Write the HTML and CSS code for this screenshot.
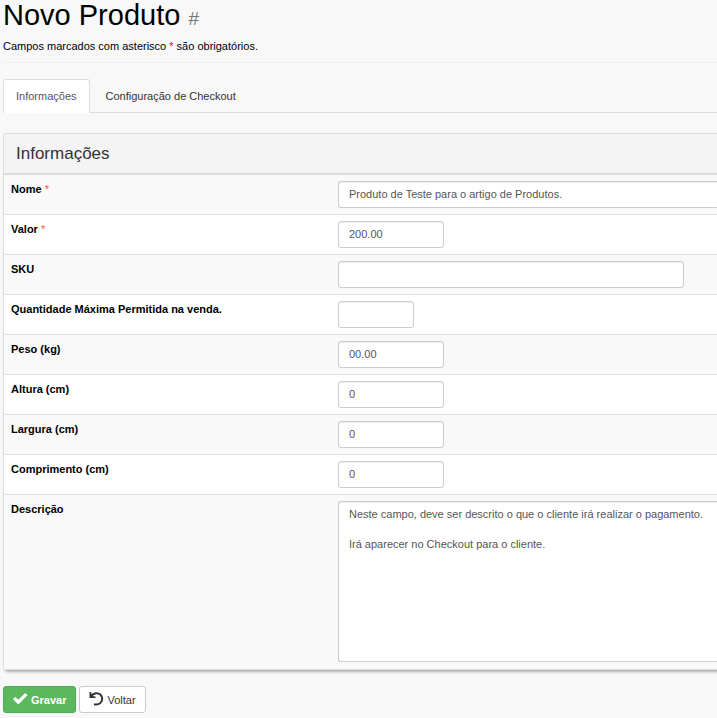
FILE: index.html
```html
<!DOCTYPE html>
<html lang="pt-BR">
<head>
  <meta charset="UTF-8">
  <meta name="viewport" content="width=device-width, initial-scale=1.0">
  <title>Novo Produto</title>
  <link rel="stylesheet" href="styles.css">
</head>
<body>
  <header class="page-header">
    <h1>Novo Produto <small>#</small></h1>
    <p>Campos marcados com asterisco <span class="required">*</span> são obrigatórios.</p>
  </header>

  <nav class="tabs">
    <a class="tab active" href="#informacoes">Informações</a>
    <a class="tab" href="#checkout">Configuração de Checkout</a>
  </nav>

  <form>
    <section class="panel" id="informacoes">
      <h2 class="panel-heading">Informações</h2>
      <div class="row">
        <label for="nome">Nome <span class="required">*</span></label>
        <div class="field"><input class="control full" type="text" id="nome" value="Produto de Teste para o artigo de Produtos."></div>
      </div>
      <div class="row">
        <label for="valor">Valor <span class="required">*</span></label>
        <div class="field"><input class="control small" type="text" id="valor" value="200.00"></div>
      </div>
      <div class="row">
        <label for="sku">SKU</label>
        <div class="field"><input class="control medium" type="text" id="sku"></div>
      </div>
      <div class="row">
        <label for="quantidade">Quantidade Máxima Permitida na venda.</label>
        <div class="field"><input class="control mini" type="text" id="quantidade"></div>
      </div>
      <div class="row">
        <label for="peso">Peso (kg)</label>
        <div class="field"><input class="control small" type="text" id="peso" value="00.00"></div>
      </div>
      <div class="row">
        <label for="altura">Altura (cm)</label>
        <div class="field"><input class="control small" type="text" id="altura" value="0"></div>
      </div>
      <div class="row">
        <label for="largura">Largura (cm)</label>
        <div class="field"><input class="control small" type="text" id="largura" value="0"></div>
      </div>
      <div class="row">
        <label for="comprimento">Comprimento (cm)</label>
        <div class="field"><input class="control small" type="text" id="comprimento" value="0"></div>
      </div>
      <div class="row">
        <label for="descricao">Descrição</label>
        <div class="field"><textarea class="control full" id="descricao">Neste campo, deve ser descrito o que o cliente irá realizar o pagamento.

Irá aparecer no Checkout para o cliente.</textarea></div>
      </div>
    </section>

    <div class="actions">
      <button class="btn btn-success" type="submit">
        <svg width="15" height="12" viewBox="0 0 15 12"><path d="M0 6.2 2.3 3.9 5.3 6.8 12.2 0 14.6 2.3 5.3 11.5Z" fill="currentColor"/></svg>
        Gravar
      </button>
      <button class="btn" type="button">
        <svg width="15" height="14" viewBox="0 0 15 14"><path d="M2.600 3.600C5 .8 9 .4 11.300 2.500C13.900 5 13.800 8.700 11.500 10.900C9.800 12.500 7.300 12.800 5 12.300" fill="none" stroke="currentColor" stroke-width="2"/><path d="M.5 0V6H6.500V4.500L4.400 4.200 2.300 1.800V0Z" fill="currentColor"/></svg>
        Voltar
      </button>
    </div>
  </form>
</body>
</html>
```

FILE: styles.css
```css
* {
  box-sizing: border-box;
}
body {
  margin: 0;
  padding: 0 0 5px 3px;
  background-color: #f8f8f8;
  color: #000;
  font-family: "Liberation Sans", Arial, sans-serif;
  font-size: 11px;
  line-height: 15px;
  overflow-x: hidden;
}
.page-header {
  margin-bottom: 16px;
  padding-bottom: 8px;
  border-bottom: 1px solid #eee;
}
h1 {
  margin: 0 0 5px;
  font-size: 29px;
  font-weight: normal;
  line-height: 31px;
}
h1 small {
  font-size: 19px;
  color: #777;
}
.page-header p {
  margin: 0;
}
.required {
  color: #f03;
  font-weight: normal;
}
.tabs {
  display: flex;
  gap: 3px;
  border-bottom: 1px solid #ddd;
}
.tab {
  margin-bottom: -1px;
  padding: 9px 12px;
  border: 1px solid transparent;
  border-bottom: 0;
  border-radius: 3px 3px 0 0;
  color: #333;
  text-decoration: none;
}
.tab.active {
  border-color: #ddd;
  background-color: #fff;
  color: #555;
}
.panel {
  margin-top: 20px;
  border: 1px solid #ddd;
  border-right: 0;
  border-radius: 3px 0 0 3px;
  background-color: #fff;
  box-shadow: 2px 2px 3px #aaa;
}
.panel-heading {
  margin: 0;
  padding: 9px 12px;
  border-bottom: 1px solid #ddd;
  background-color: #f4f4f4;
  color: #333;
  font-size: 17px;
  font-weight: normal;
  line-height: 21px;
}
.row {
  display: grid;
  grid-template-columns: 46% 1fr;
  border-top: 1px solid #ddd;
}
.row:nth-child(even) {
  background-color: #f9f9f9;
}
.row label {
  padding: 7px;
  font-weight: bold;
}
.row .required {
  color: #f53;
}
.field {
  display: flex;
  padding: 6px 0 6px 6px;
}
.control {
  height: 27px;
  padding: 4px 10px 6px;
  border: 1px solid #ccc;
  border-radius: 3px;
  background-color: #fff;
  box-shadow: inset 0 1px 1px rgba(0, 0, 0, 0.08);
  color: #555;
  font: inherit;
}
.control.full {
  width: 100%;
  border-right: 0;
  border-radius: 3px 0 0 3px;
}
.control.medium {
  width: 346px;
}
.control.small {
  width: 106px;
}
.control.mini {
  width: 76px;
}
textarea.control {
  height: 161px;
  margin-bottom: 1px;
  padding: 5px 0 5px 10px;
  resize: none;
}
.actions {
  display: flex;
  gap: 3px;
  margin-top: 16px;
}
.btn {
  display: flex;
  align-items: center;
  gap: 3px;
  height: 27px;
  padding: 1px 9px 0;
  border: 1px solid #ccc;
  border-radius: 3px;
  background-color: #fff;
  color: #333;
  font: inherit;
  cursor: pointer;
}
.btn svg {
  margin-bottom: 3px;
}
.btn-success {
  border-color: #4cae4c;
  background-color: #5cb85c;
  color: #fff;
  font-weight: bold;
}
```
